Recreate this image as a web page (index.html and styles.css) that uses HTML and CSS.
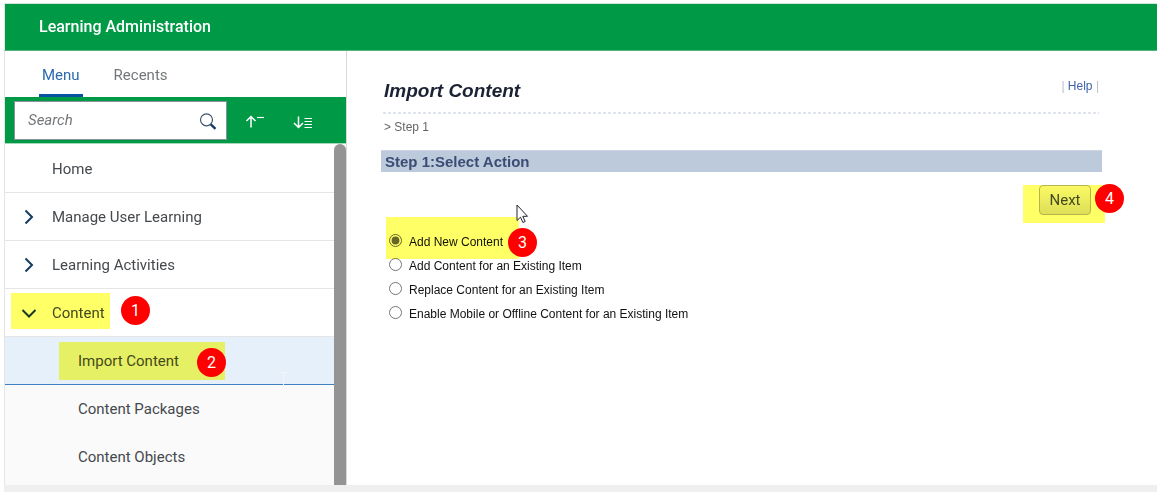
FILE: index.html
```html
<!DOCTYPE html>
<html lang="en">
<head>
<meta charset="utf-8">
<title>Learning Administration</title>
<link rel="stylesheet" href="styles.css">
</head>
<body>
<div class="app">
  <header class="topbar">Learning Administration</header>
  <div class="body">
    <aside class="sidebar">
      <nav class="tabs">
        <a class="tab tab-active" href="#menu">Menu</a>
        <a class="tab" href="#recents">Recents</a>
      </nav>
      <div class="tools">
        <div class="search">
          <input class="search-input" type="text" placeholder="Search" aria-label="Search">
          <button class="icon-button" type="button" aria-label="Run search">
            <svg width="18" height="18" viewBox="0 0 18 18" fill="none" stroke="#3c5670"><circle cx="7.5" cy="7.8" r="6" stroke-width="1.2"/><path d="M11.8 12.300 16.500 16.800" stroke="#173a63" stroke-width="2.4"/></svg>
          </button>
        </div>
        <button class="icon-button tool" type="button" aria-label="Collapse all">
          <svg width="20" height="16" viewBox="0 0 20 16" fill="none" stroke="#fff" stroke-width="1.5"><path d="M6 14.500V3.500M1.500 8 6 3.500 10.500 8"/><path d="M12 4.500h7" stroke-width="1.200"/></svg>
        </button>
        <button class="icon-button tool" type="button" aria-label="Expand all">
          <svg width="20" height="16" viewBox="0 0 20 16" fill="none" stroke="#fff" stroke-width="1.5"><path d="M5.500 3.500v11M1 10l4.500 4.500L10 10"/><path d="M11.500 5.500H19M11.500 8.500H19M11.500 11.500H19M11.500 14.500H19" stroke-width="1.100"/></svg>
        </button>
      </div>
      <div class="scroller">
        <ul class="menu">
          <li class="row"><a class="link" href="#home">Home</a></li>
          <li class="row">
            <svg class="chevron" width="16" height="16" viewBox="0 0 16 16"><path d="M4.500 1.500 11 8 4.500 14.500"/></svg>
            <a class="link" href="#users">Manage User Learning</a>
          </li>
          <li class="row">
            <svg class="chevron" width="16" height="16" viewBox="0 0 16 16"><path d="M4.500 1.500 11 8 4.500 14.500"/></svg>
            <a class="link" href="#activities">Learning Activities</a>
          </li>
          <li class="row">
            <svg class="chevron" width="16" height="16" viewBox="0 0 16 16"><path d="M1.500 5 8 11.500 14.500 5"/></svg>
            <a class="link" href="#content">Content</a>
            <span class="highlight highlight-content"></span>
            <span class="badge badge-1">1</span>
          </li>
          <li class="row row-child row-selected">
            <a class="link" href="#import">Import Content</a>
            <span class="highlight highlight-import"></span>
            <span class="badge badge-2">2</span>
            <svg class="caret" width="7" height="16" viewBox="0 0 7 16" fill="none" stroke="#f4f4f4"><path d="M0 .5h7M3.500 .5v15M0 15.500h7"/></svg>
          </li>
          <li class="row row-child"><a class="link" href="#packages">Content Packages</a></li>
          <li class="row row-child"><a class="link" href="#objects">Content Objects</a></li>
        </ul>
        <div class="thumb"></div>
      </div>
    </aside>
    <main class="main">
      <div class="heading">
        <h1 class="title">Import Content</h1>
        <div class="help">| <a class="help-link" href="#help">Help</a> |</div>
      </div>
      <div class="crumbs">&gt; Step 1</div>
      <h2 class="step">Step 1:Select Action</h2>
      <div class="actions">
        <button class="next" type="button">Next</button>
        <span class="highlight highlight-next"></span>
        <span class="badge badge-4">4</span>
      </div>
      <form class="options">
        <label class="option"><input class="radio" type="radio" name="action" checked>Add New Content</label>
        <label class="option"><input class="radio" type="radio" name="action">Add Content for an Existing Item</label>
        <label class="option"><input class="radio" type="radio" name="action">Replace Content for an Existing Item</label>
        <label class="option"><input class="radio" type="radio" name="action">Enable Mobile or Offline Content for an Existing Item</label>
        <span class="highlight highlight-option"></span>
        <span class="badge badge-3">3</span>
        <svg class="pointer" width="13" height="20" viewBox="0 0 13 20" fill="#fff" stroke="#22222e"><path d="M1 1v15.500l3.500-3.300 2.400 5.300 2.300-1-2.400-5.200H11.500z"/></svg>
      </form>
    </main>
  </div>
  <div class="footer"></div>
</div>
</body>
</html>
```

FILE: styles.css
```css
* { box-sizing: border-box; }
body { margin: 0; background: #fff; font-family: "Liberation Sans", Arial, sans-serif; }
.app { display: flex; flex-direction: column; min-height: 100vh; padding: 3px 7px 0 4px; }

.topbar {
  height: 48px; padding-left: 34px; display: flex; align-items: center;
  background: #009a46; color: #fff;
  border-top: 1px solid #cfe8da; border-left: 1px solid #e5e5e5; border-bottom: 1px solid #55b582;
  font: 500 16px/20px Roboto, sans-serif;
}
.body { display: flex; flex: 1; }
.sidebar {
  width: 343px; flex: none; display: flex; flex-direction: column;
  border-left: 1px solid #e5e5e5; border-right: 1px solid #d9d9d9;
  font: 15px/20px Roboto, sans-serif; color: #45494d;
}
.tabs { display: flex; gap: 20px; height: 46px; padding-left: 34px; }
.tab { display: flex; align-items: center; padding: 4px 3px 0; border-bottom: 3px solid transparent; color: #74777a; text-decoration: none; }
.tab + .tab { padding-left: 11px; }
.tab-active { color: #2a6ab0; border-bottom-color: #0854a0; border-radius: 2px 2px 0 0; }
.tools { display: flex; align-items: center; height: 47px; padding-left: 9px; background: #009a46; border-bottom: 1px solid #a5d8bb; }
.search { display: flex; align-items: center; width: 213px; height: 39px; background: #fff; border: 1px solid #89919a; padding: 0 9px 0 13px; }
.search-input { flex: 1; min-width: 0; border: 0; padding: 0; outline: 0; background: none; font: italic 15px/20px Roboto, sans-serif; color: #32363a; }
.search-input::placeholder { color: #74777a; opacity: 1; }
.icon-button { display: flex; border: 0; padding: 2px 0 0; background: none; }
.tool { margin-left: 18px; }
.tool + .tool { margin-left: 28px; }

.scroller { display: flex; flex: 1; background: #fafafa; }
.menu { flex: 1; margin: 0; padding: 0 0 4px; list-style: none; border-top: 1px solid #fff; }
.row { position: relative; display: flex; align-items: center; height: 48px; padding-left: 47px; background: #fff; border-bottom: 1px solid #e5e5e5; }
.chevron { margin: 0 15px 0 -31px; fill: none; stroke: #173a5e; stroke-width: 2; }
.link { color: inherit; text-decoration: none; }
.row-child { padding-left: 73px; background: #fafafa; border-bottom-color: #fafafa; }
.row-selected { background: #e5f0fa; border-bottom-color: #3d7fbf; }
.thumb { width: 12px; background: #949494; border-radius: 6px 6px 0 0; }
.footer { height: 7px; background: #efefef; }

.main { flex: 1; min-width: 0; padding: 27px 55px 0 34px; }
.heading { display: flex; justify-content: space-between; margin: 0 3px 0 2px; padding: 0 0 9px 1px; }
.heading::after { content: none; }
.title { margin: 0; font-size: 19px; line-height: 25px; font-style: italic; color: #1a2233; }
.help { font-size: 12px; line-height: 16px; color: #b9c0cc; }
.help-link { color: #3f62a8; text-decoration: none; }
.crumbs {
  margin: 0 3px 16px 2px; padding: 8px 0 0 1px; font-size: 12px; line-height: 14px; color: #666;
  background: repeating-linear-gradient(90deg, #dfe4ed 0 3px, transparent 3px 5px) top / 100% 2px no-repeat;
}
.step { margin: 0; padding: 0 4px; font-size: 15px; line-height: 21px; color: #3b4d75; background: #bdcadb; border: 1px solid #cdd6e2; border-width: 1px 0 0; }
.actions { position: relative; display: flex; justify-content: flex-end; padding: 13px 11px 0 0; }
.next { width: 52px; height: 30px; padding: 0; border: 1px solid #b5b5b5; border-radius: 4px; background: linear-gradient(#fafafa, #dedede); font: 15px/20px Roboto, sans-serif; color: #45494d; }
.options { position: relative; margin: 15px 0 0; padding: 0 0 0 8px; }
.option { display: flex; align-items: center; height: 24px; font-size: 12px; color: #111; }
.radio { width: 13px; height: 13px; margin: 0 7px 4px 0; accent-color: #666; }

.highlight { position: absolute; background: #ffff66; mix-blend-mode: multiply; }
.highlight-content { left: 6px; top: 4px; width: 99px; height: 36px; }
.highlight-import { left: 54px; top: 5px; width: 166px; height: 38px; }
.highlight-next { right: -3px; top: 13px; width: 82px; height: 38px; }
.highlight-option { left: 5px; top: -13px; width: 133px; height: 42px; }
.badge { position: absolute; width: 29px; height: 29px; border-radius: 50%; background: #f00; color: #fff; font: 16px/29px Roboto, sans-serif; text-align: center; }
.badge-1 { left: 116px; top: 7px; }
.badge-2 { left: 192px; top: 11px; }
.badge-3 { left: 127px; top: -2px; }
.badge-4 { right: -22px; top: 12px; }
.caret { position: absolute; left: 275px; top: 35px; }
.pointer { position: absolute; left: 135px; top: -26px; }
```
